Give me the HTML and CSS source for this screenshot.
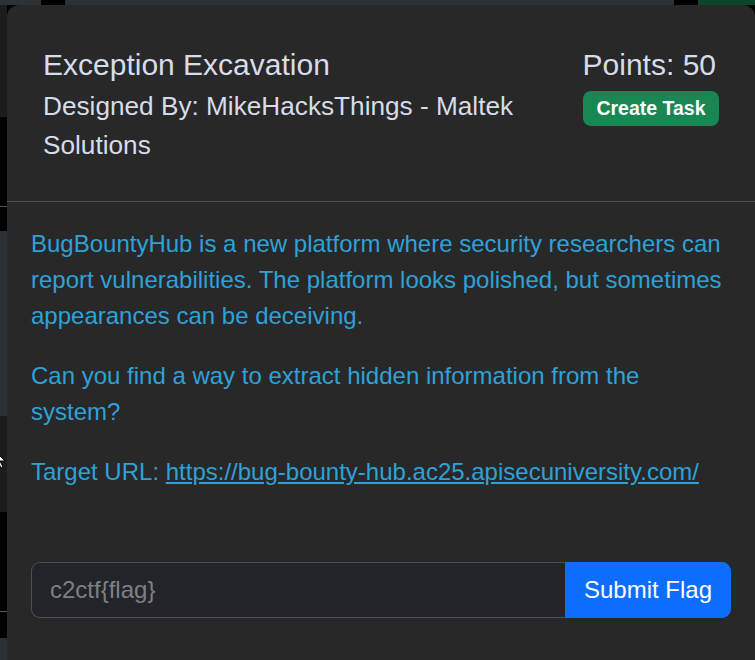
FILE: index.html
```html
<!DOCTYPE html>
<html lang="en">
<head>
<meta charset="utf-8">
<title>Exception Excavation</title>
<link rel="stylesheet" href="styles.css">
</head>
<body>
<div class="page">
  <div class="topbar">
    <span class="seg seg-gray w41"></span>
    <span class="seg seg-black w24"></span>
    <span class="seg seg-gray w609"></span>
    <span class="seg seg-black w24"></span>
    <span class="seg seg-green grow"></span>
  </div>
  <div class="leftbar">
    <span class="blk blk-dark h112"></span>
    <span class="blk blk-black h89"></span>
    <span class="blk blk-line"></span>
    <span class="blk blk-black h24"></span>
    <span class="blk blk-slate h185"></span>
    <span class="blk blk-dark h96 cursor-wrap">
      <svg class="cursor" width="7" height="18" viewBox="0 0 7 18"><path d="M-6 0 L5 11 L0 11 L3 17 L1 18 L-2 12 L-6 16 Z" fill="#fff" stroke="#000" stroke-width="1"/></svg>
    </span>
    <span class="blk blk-black h99"></span>
    <span class="blk blk-line"></span>
    <span class="blk blk-black h26"></span>
    <span class="blk blk-slate grow"></span>
  </div>
  <div class="modal">
    <div class="modal-header">
      <div class="head-left">
        <h5 class="title">Exception Excavation</h5>
        <div class="designer">Designed By: MikeHacksThings - Maltek Solutions</div>
      </div>
      <div class="head-right">
        <div class="points">Points: 50</div>
        <span class="badge">Create Task</span>
      </div>
    </div>
    <div class="modal-body">
      <p>BugBountyHub is a new platform where security researchers can report vulnerabilities. The platform looks polished, but sometimes appearances can be deceiving.</p>
      <p>Can you find a way to extract hidden information from the system?</p>
      <p>Target URL: <a href="#" class="link">https://bug-bounty-hub.ac25.apisecuniversity.com/</a></p>
    </div>
    <div class="modal-footer">
      <div class="input-group">
        <input class="flag-input" type="text" placeholder="c2ctf{flag}">
        <button class="submit-btn" type="button">Submit Flag</button>
      </div>
    </div>
  </div>
</div>
</body>
</html>
```
FILE: styles.css
```css
* { box-sizing: border-box; }
html, body { margin: 0; padding: 0; }
body {
  width: 755px;
  height: 660px;
  overflow: hidden;
  background: #000;
  font-family: "Liberation Sans", Arial, sans-serif;
}
.page {
  display: grid;
  grid-template-columns: 7px 748px;
  grid-template-rows: 5px 655px;
  height: 660px;
}
.topbar {
  grid-column: 1 / 3;
  display: flex;
}
.seg { display: block; height: 5px; }
.seg-gray { background: #2e3236; }
.seg-black { background: #000; }
.seg-green { background: #0c4629; }
.w41 { width: 41px; }
.w24 { width: 24px; }
.w609 { width: 609px; }
.grow { flex: 1; }

.leftbar {
  display: flex;
  flex-direction: column;
}
.blk { display: block; width: 7px; flex-shrink: 0; }
.blk-dark { background: #1c1c1c; }
.blk-black { background: #000; }
.blk-slate { background: #2b3035; }
.blk-line { height: 1px; background: #5a5a5a; }
.h112 { height: 112px; }
.h89 { height: 89px; }
.h24 { height: 24px; }
.h185 { height: 185px; }
.h96 { height: 96px; }
.h99 { height: 99px; }
.h26 { height: 26px; }
.cursor-wrap { padding-top: 34px; overflow: hidden; }
.cursor { display: block; }

.modal {
  background: #282828;
  border-radius: 12px 12px 0 0;
  overflow: hidden;
  display: flex;
  flex-direction: column;
}
.modal-header {
  display: flex;
  justify-content: space-between;
  align-items: flex-start;
  padding: 37px 36px 36px 36px;
  border-bottom: 1px solid #4b4e52;
  color: #d6dcea;
}
.head-left { width: 490px; }
.title {
  margin: 0;
  font-size: 30px;
  font-weight: 400;
  line-height: 45px;
}
.designer {
  font-size: 26.2px;
  line-height: 39px;
}
.head-right {
  display: flex;
  flex-direction: column;
  align-items: flex-end;
}
.points {
  font-size: 30px;
  line-height: 45px;
  margin-right: 3px;
}
.badge {
  display: inline-block;
  margin-top: 4px;
  background: #198754;
  color: #fff;
  font-weight: 700;
  font-size: 19.5px;
  line-height: 1;
  padding: 7.5px 13.5px;
  border-radius: 8px;
}
.modal-body {
  padding: 24px 24px 24px 24px;
  color: #2ea1d8;
  font-size: 24px;
  line-height: 36px;
}
.modal-body p { margin: 0 0 24px 0; }
.link { color: #2ea1d8; text-decoration: underline; }
.modal-footer {
  padding: 24px;
}
.input-group {
  display: flex;
  height: 56px;
}
.flag-input {
  flex: 1;
  min-width: 0;
  background: #212529;
  border: 1px solid #4a4f55;
  border-right: none;
  border-radius: 9px 0 0 9px;
  padding: 9px 18px;
  font-family: "Liberation Sans", Arial, sans-serif;
  font-size: 24px;
  line-height: 36px;
  color: #dee2e6;
  outline: none;
}
.flag-input::placeholder { color: #7d8084; }
.submit-btn {
  width: 166px;
  white-space: nowrap;
  background: #0d6efd;
  border: 1px solid #0d6efd;
  border-radius: 0 9px 9px 0;
  color: #fff;
  font-family: "Liberation Sans", Arial, sans-serif;
  font-size: 24px;
  line-height: 36px;
  padding: 9px 0;
  text-align: center;
}
```
